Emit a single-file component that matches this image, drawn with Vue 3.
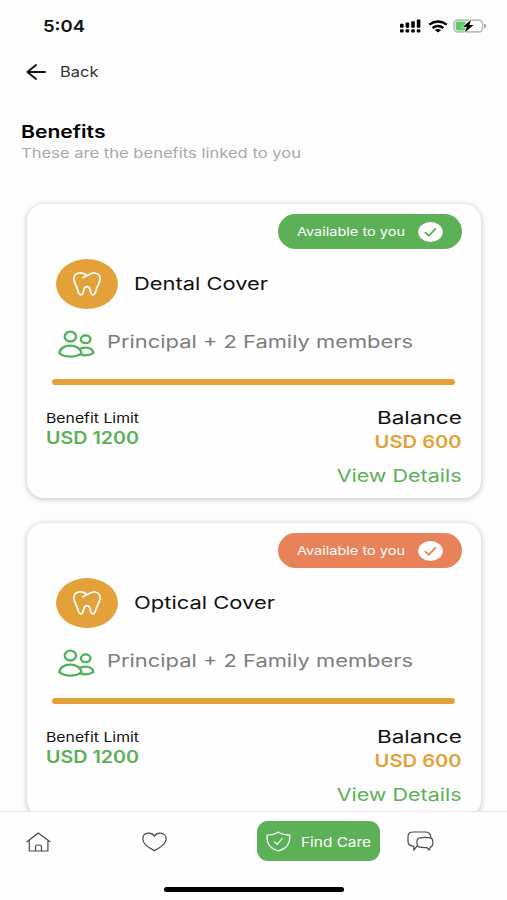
<!--
  Benefits screen: list of covers linked to the member,
  with the status bar on top and the tab bar at the bottom.
-->

<template>
  <div class="screen">
    <!-- status bar -->
    <div class="status-bar">
      <span v-fit="42" class="time">5:04</span>
      <div class="status-icons">
        <svg class="signal" viewBox="0 0 21 14">
          <g fill="#000">
            <rect x="0" y="4.8" width="3.6" height="4" rx="0.8" />
            <rect x="5.6" y="3.6" width="3.6" height="5.2" rx="0.8" />
            <rect x="11.2" y="2.2" width="3.6" height="6.6" rx="0.8" />
            <rect x="16.8" y="0.6" width="3.6" height="8.2" rx="0.8" />
            <rect x="0" y="10.2" width="3.6" height="3.2" rx="1" />
            <rect x="5.6" y="10.2" width="3.6" height="3.2" rx="1" />
            <rect x="11.2" y="10.2" width="3.6" height="3.2" rx="1" />
            <rect x="16.8" y="10.2" width="3.6" height="3.2" rx="1" />
          </g>
        </svg>
        <svg class="wifi" viewBox="0 0 20 13">
          <g fill="none" stroke="#000" stroke-width="2.3">
            <path d="M1.2 4.6Q10 -1.6 18.8 4.6" />
            <path d="M4.6 8Q10 4 15.4 8" />
          </g>
          <path d="M6.8 10Q10 7.8 13.2 10L10 12.6Z" fill="#000" />
        </svg>
        <svg class="battery" viewBox="0 0 34 14">
          <rect x="0.9" y="1.1" width="28.6" height="11.8" rx="3.6" fill="#fff" stroke="#bdbdbd" stroke-width="1.6" />
          <path d="M31 4.8Q33.4 5.4 33.4 7T31 9.2Z" fill="#a5a5a5" />
          <rect x="2.6" y="2.6" width="10.4" height="8.8" rx="1.6" fill="#5fce69" />
          <path d="M18 0.8L9.8 8H13.8L11.8 13.4L20.6 6H16.4Z" fill="#000" stroke="#fff" stroke-width="1.2" paint-order="stroke" />
        </svg>
      </div>
    </div>

    <!-- back link -->
    <div class="back">
      <svg viewBox="0 0 20 16">
        <path d="M19 8H1.6M10 1L1.4 8L10 15" fill="none" stroke="#111" stroke-width="1.9" stroke-linecap="round" stroke-linejoin="round" />
      </svg>
      <span v-fit="38.5">Back</span>
    </div>

    <div class="heading">
      <h1 v-fit="84.5">Benefits</h1>
      <p v-fit="280">These are the benefits linked to you</p>
    </div>

    <!-- cover cards -->
    <main class="cards">
      <section v-for="cover in covers" :key="cover.name" class="card">
        <div class="badge" :class="cover.tone">
          <span v-fit="108">Available to you</span>
          <svg viewBox="0 0 25 20" preserveAspectRatio="none">
            <ellipse cx="12.5" cy="10" rx="12.3" ry="10" fill="#fff" />
            <path d="M7.3 10.6L10.9 13.7L17.4 6.9" fill="none" stroke="currentColor" stroke-width="1.8" stroke-linecap="round" stroke-linejoin="round" />
          </svg>
        </div>

        <div class="title">
          <span class="avatar">
            <svg viewBox="0 0 28 24">
              <path d="M14 3.6C11.8 1.4 9 .8 6.4 1C2.6 1.3.7 4 .9 7.4C1.2 11 3.4 13.4 4.4 17.2C5.3 20.6 6 22.8 8 22.8C10.2 22.8 10 20.4 10.9 17.6C11.9 13.6 16 13.6 17 17.6C17.9 20.4 17.7 22.8 19.9 22.8C21.9 22.8 22.5 20.6 23.4 17.2C24.4 13.4 26.8 11 27.1 7.4C27.3 4 25.2 1.3 21.8 1C17.6.8 15 3.4 9.8 5.6" fill="none" stroke="#fff" stroke-width="1.75" stroke-linecap="round" stroke-linejoin="round" />
            </svg>
          </span>
          <h2 v-fit="cover.nameWidth">{{ cover.name }}</h2>
        </div>

        <div class="members">
          <svg viewBox="0 0 37 28">
            <g fill="none" stroke="#4fb15a" stroke-width="2.3">
              <ellipse cx="12.4" cy="6.6" rx="5.7" ry="4.9" />
              <ellipse cx="27.7" cy="9.3" rx="4.8" ry="3.9" />
              <path d="M1.4 23.4C1.6 18.8 6.2 15.6 12.2 15.6S23 18.8 23.4 23.4C20.4 25.8 16.6 26.6 12.4 26.6S4.4 25.8 1.4 23.4Z" />
              <path d="M20.6 19.4C22.6 18.2 25 17.7 27.4 17.7C31.6 17.7 34.8 19.8 35.4 22.9C33 24.7 30.2 25.3 27.2 25.3C25.6 25.3 24 25.1 22.4 24.5" />
            </g>
          </svg>
          <span v-fit="306">Principal + 2 Family members</span>
        </div>

        <div class="usage"></div>

        <div class="amounts">
          <div class="limit">
            <span v-fit="93" class="limit-label">Benefit Limit</span>
            <strong v-fit="93">USD 1200</strong>
          </div>
          <div class="balance">
            <span v-fit="85">Balance</span>
            <strong v-fit="87">USD 600</strong>
            <a v-fit="125">View Details</a>
          </div>
        </div>
      </section>
    </main>

    <!-- tab bar -->
    <nav class="tab-bar">
      <div class="tab">
        <svg width="25" height="20" viewBox="0 0 25 20">
          <path d="M1 9.7L12.3 1L24 9.7M3.3 8.2V19H21.9V8.2M9.5 19V14.8Q9.5 13 11.2 13H13.8Q15.5 13 15.5 14.8V19" />
        </svg>
      </div>
      <div class="tab">
        <svg width="25" height="20" viewBox="0 0 25 20">
          <path d="M12.4 4.1C10.8 1.6 8.4.9 6.2 1.1C3 1.4.7 3.7.8 7C1 12.4 9 17 12.4 18.6C16 17 24 12.2 24.1 7C24.1 3.6 21.6 1.3 18.5 1.1C16.2.9 13.9 1.7 12.4 4.1Z" />
        </svg>
      </div>
      <div class="tab active">
        <svg width="25" height="21" viewBox="0 0 25 21">
          <path d="M12.3 1C9.6 3.1 5.6 4 1 4C.5 12 3.4 17.8 12.3 20C21.4 17.8 24.3 12 23.8 4C19.2 4 15 3.1 12.3 1ZM8.6 10.9L11.2 13.3L16.2 7.6" />
        </svg>
        <span v-fit="70">Find Care</span>
      </div>
      <div class="tab">
        <svg width="27" height="21" viewBox="0 0 27 21">
          <path d="M9.8 15.2L6.8 19.2V15.2C2.6 15 1 13.6 1 10.4V5.6C1 2.2 2.8 1 6.6 1H18.2C22 1 23.6 2.6 23.8 6.4" />
          <path d="M13 6.8C17 6.3 20 6.3 23.2 6.8C25.2 7.2 25.9 8.2 25.9 11.2S25.2 15.8 23.2 16.2L22.4 19L19.6 16.5C17 16.7 15 16.6 13 16.2C10.6 15.8 9.9 14.6 9.9 11.2S10.8 7.1 13 6.8Z" />
        </svg>
      </div>
      <div class="home-indicator"></div>
    </nav>
  </div>
</template>

<script setup>
// tone picks the colour of the availability badge
const covers = [
  { name: 'Dental Cover', nameWidth: 134, tone: 'green' },
  { name: 'Optical Cover', nameWidth: 141, tone: 'coral' }
]

// v-fit: widen the lettering to the given width in px
const vFit = {
  mounted(el, { value }) {
    el.style.transform = `scaleX(${value / el.getBoundingClientRect().width})`
  }
}
</script>

<style>
body {
  background: #fdfdfd;
}
</style>

<style scoped>
.screen {
  display: flex;
  flex-direction: column;
  height: 900px;
  overflow: hidden;
  background: #fdfdfd;
  color: #111;
  font-family: Inter, "Liberation Sans", sans-serif;
}

h1,
h2,
p {
  margin: 0;
}

span,
strong,
a,
h1,
h2,
p {
  width: max-content;
  white-space: nowrap;
  transform-origin: left center;
}

svg {
  display: block;
  flex: none;
}

/* ---------- status bar ---------- */
.status-bar {
  display: flex;
  flex: none;
  justify-content: space-between;
  align-items: center;
  height: 52px;
  padding: 0 20px 0 42.5px;
}

.time {
  font-size: 16.5px;
  font-weight: 600;
}

.status-icons {
  display: flex;
  align-items: center;
  gap: 7px;
}

.signal {
  width: 21px;
  height: 14px;
}

.wifi {
  width: 20px;
  height: 13px;
}

.battery {
  width: 34px;
  height: 14px;
  margin-left: -2px;
}

/* ---------- back and heading ---------- */
.back {
  display: flex;
  flex: none;
  align-items: center;
  gap: 14px;
  height: 39px;
  padding-left: 26px;
  font-size: 14.5px;
  color: #333;
}

.back svg {
  width: 20px;
  height: 16px;
}

.heading {
  flex: none;
  padding: 29px 0 0 21px;
}

h1 {
  font-size: 17.5px;
  font-weight: 600;
  line-height: 23px;
  color: #000;
}

p {
  font-size: 13.5px;
  line-height: 20px;
  color: #a9a9a9;
}

/* ---------- cards ---------- */
.cards {
  display: flex;
  flex: 1;
  flex-direction: column;
  gap: 25.5px;
  min-height: 0;
  padding: 41px 26.5px 0 27px;
  overflow: hidden;
}

.card {
  flex: none;
  box-sizing: border-box;
  height: 293.5px;
  padding: 10px 19px 0;
  border-radius: 17px;
  background: #fefefe;
  box-shadow: 0 1px 5px 1px rgba(0, 0, 0, 0.18);
}

.badge {
  display: flex;
  align-items: center;
  justify-content: space-between;
  box-sizing: border-box;
  width: 184px;
  height: 35px;
  margin-left: auto;
  margin-right: -0.5px;
  padding: 0 19px;
  border-radius: 18px;
  font-size: 12px;
  color: #fff;
}

.badge svg {
  width: 25px;
  height: 20px;
}

.badge.green {
  background: #5cb157;
}

.badge.green svg {
  color: #5cb157;
}

.badge.coral {
  background: #e88359;
}

.badge.coral svg {
  color: #e88359;
}

.title {
  display: flex;
  align-items: center;
  gap: 16px;
  margin: 10px 0 0 10px;
}

.avatar {
  display: grid;
  place-items: center;
  width: 62px;
  height: 50px;
  border-radius: 50%;
  background: #e5a139;
}

.avatar svg {
  width: 28px;
  height: 24px;
}

h2 {
  font-size: 17.5px;
  font-weight: 400;
  line-height: 24px;
}

.members {
  display: flex;
  align-items: center;
  gap: 12px;
  height: 28px;
  margin: 21px 0 0 11.5px;
  font-size: 17.5px;
  color: #7d7d7d;
}

.members svg {
  width: 37px;
  height: 28px;
}

.members span {
  margin-top: -5px;
}

.usage {
  height: 6px;
  margin: 21px 6.5px 0 6px;
  border-radius: 3px;
  background: #e5a139;
}

.amounts {
  display: flex;
  justify-content: space-between;
  padding-top: 22px;
}

.limit,
.balance {
  display: flex;
  flex-direction: column;
}

.limit {
  margin: 1px 0 0 -0.5px;
}

.limit-label {
  font-size: 13.5px;
  line-height: 20px;
}

.limit strong {
  font-size: 17px;
  font-weight: 600;
  line-height: 20px;
  color: #5cb157;
}

.balance {
  align-items: flex-end;
  font-size: 17.5px;
  line-height: 22px;
}

.balance > * {
  transform-origin: right center;
}

.balance strong {
  margin-top: 2px;
  font-weight: 600;
  color: #e5a139;
}

.balance a {
  margin-top: 12px;
  color: #5cb157;
}

/* ---------- tab bar ---------- */
.tab-bar {
  display: grid;
  flex: none;
  grid-template-columns: 114px 103px 123px 103px;
  grid-template-rows: 40px 5px;
  column-gap: 13px;
  row-gap: 26px;
  justify-content: start;
  box-sizing: border-box;
  height: 89px;
  padding: 9px 0 0 14px;
  border-top: 1px solid #e6e6e6;
  background: #fefefe;
}

/* idle tabs carry a faint speck in each corner */
.tab {
  display: flex;
  align-items: center;
  width: 103px;
  box-sizing: border-box;
  padding: 1px 0 0 12px;
  background:
    linear-gradient(#f0f0f0, #f0f0f0) left top / 1px 1px no-repeat,
    linear-gradient(#f0f0f0, #f0f0f0) right top / 1px 1px no-repeat,
    linear-gradient(#f0f0f0, #f0f0f0) left bottom / 1px 1px no-repeat,
    linear-gradient(#f0f0f0, #f0f0f0) right bottom / 1px 1px no-repeat;
}

.tab:nth-child(2) {
  padding-left: 1px;
}

.tab:nth-child(4) {
  padding: 0 0 0 14px;
}

.tab svg {
  fill: none;
  stroke: #484848;
  stroke-width: 1.2;
  stroke-linejoin: round;
  stroke-linecap: round;
}

.tab.active {
  gap: 10px;
  width: auto;
  padding: 1px 0 0 9px;
  border-radius: 11px;
  background: #5cb157;
  font-size: 13.5px;
  color: #fff;
}

.tab.active svg {
  stroke: #fff;
}

.home-indicator {
  grid-column: 1 / -1;
  width: 180px;
  height: 5px;
  margin-left: 150px;
  border-radius: 3px;
  background: #000;
}
</style>
